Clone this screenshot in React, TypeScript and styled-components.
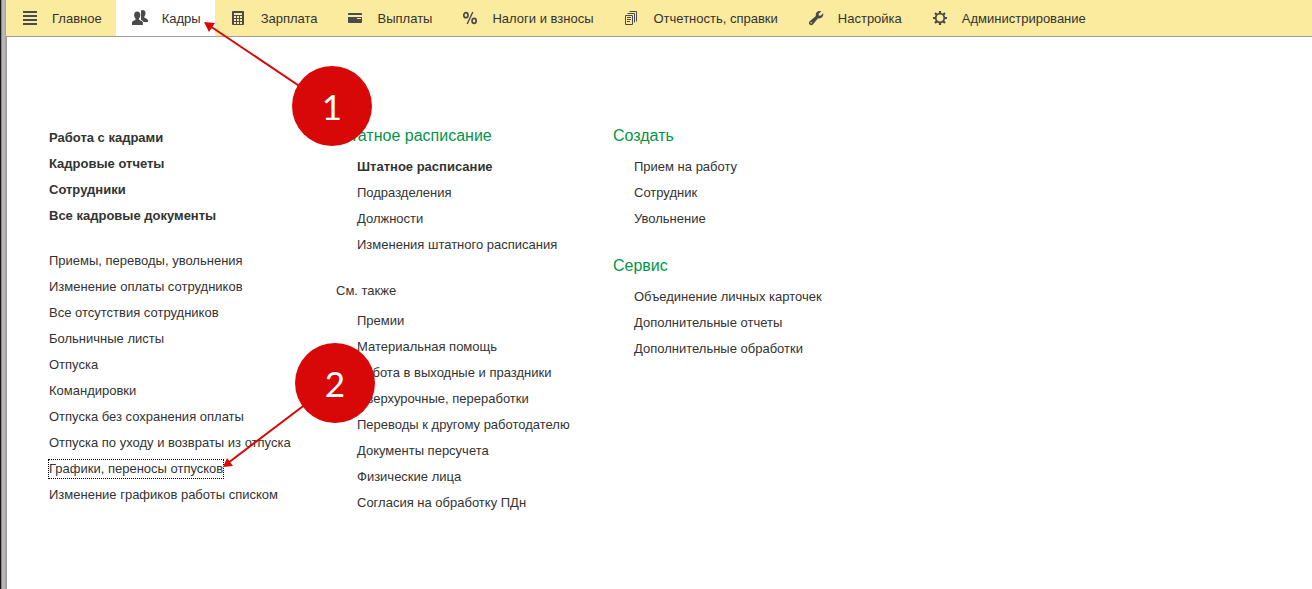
import React from 'react';
import styled, { createGlobalStyle, css } from 'styled-components';

const GlobalStyle = createGlobalStyle`
  *, *::before, *::after { box-sizing: border-box; }
  body {
    margin: 0;
    background: #ffffff;
    color: #333333;
    font-family: "Liberation Sans", Arial, sans-serif;
    font-size: 13px;
  }
`;

const Frame = styled.div`
  position: relative;
  display: flex;
  min-height: 100vh;
`;

const WindowEdge = styled.div`
  flex: none;
  width: 6px;
  border-left: 1px solid #1a1618;
  background: linear-gradient(to right, #8b888a 0 1px, #b9b6b8 1px 4px, #a5a2a4 4px 5px);
`;

const Main = styled.div`
  flex: 1;
  min-width: 0;
  display: flex;
  flex-direction: column;
`;

const SectionBar = styled.nav`
  display: flex;
  height: 37px;
  background: #faeb9e;
  border-bottom: 1px solid #a0a0a0;
`;

const SectionTab = styled.button<{ $active?: boolean }>`
  display: flex;
  align-items: center;
  gap: 14px;
  height: 36px;
  padding: 0 14px 0 16px;
  border: 0;
  background: ${(p) => (p.$active ? '#ffffff' : 'transparent')};
  color: #333333;
  font: inherit;
  white-space: nowrap;
  cursor: pointer;

  svg {
    flex: none;
    display: block;
  }
`;

const Panel = styled.main`
  flex: 1;
  display: grid;
  grid-template-columns: 287px 277px 1fr;
  align-items: start;
  padding: 81px 0 40px 42px;
  border-left: 1px solid #a0a0a0;
`;

const Column = styled.div<{ $plain?: boolean }>`
  display: flex;
  flex-direction: column;
  gap: ${(p) => (p.$plain ? 19 : 16)}px;
  padding-top: ${(p) => (p.$plain ? 7 : 0)}px;
`;

const GroupTitle = styled.h2<{ $minor?: boolean }>`
  margin: 0;
  font-weight: 400;
  ${(p) =>
    p.$minor
      ? css`
          font-size: 13px;
          line-height: 34px;
        `
      : css`
          color: #009646;
          font-size: 16px;
          line-height: 36px;
        `}
`;

const LinkList = styled.ul<{ $indent?: boolean }>`
  margin: 0;
  padding: 0 0 0 ${(p) => (p.$indent ? 21 : 0)}px;
  list-style: none;
`;

const LinkRow = styled.li`
  display: flex;
  align-items: center;
  height: 26px;
`;

const CommandLink = styled.a<{ $strong?: boolean; $focused?: boolean }>`
  color: #333333;
  font-weight: ${(p) => (p.$strong ? 700 : 400)};
  line-height: 18px;
  text-decoration: none;
  white-space: nowrap;
  outline: ${(p) => (p.$focused ? '1px dotted #000000' : 'none')};
`;

const Arrows = styled.svg`
  position: absolute;
  left: 0;
  top: 0;
  pointer-events: none;
`;

const StepMark = styled.div<{ $x: number; $y: number }>`
  position: absolute;
  left: ${(p) => p.$x}px;
  top: ${(p) => p.$y}px;
  width: 80px;
  height: 80px;
  border-radius: 50%;
  background: #d80808;
  color: #ffffff;
  font-family: Lato, sans-serif;
  font-size: 35px;
  line-height: 80px;
  text-align: center;
`;

const INK = '#4a4a4a';

const Icon = ({ children }: { children: React.ReactNode }) => (
  <svg width="16" height="16" viewBox="0 0 16 16" fill={INK} aria-hidden="true">
    {children}
  </svg>
);

const MenuIcon = () => (
  <Icon>
    <path d="M1 1h14v2H1zM1 5h14v2H1zM1 9h14v2H1zM1 13h14v2H1z" />
  </Icon>
);

const PeopleIcon = () => (
  <Icon>
    <path d="M10.6 0c1.900 0 2.900 1.300 2.900 3.100 0 1.400-.5 2.600-1.200 3.300v1.200l2.700 1.300c.7.4 1 .9 1 1.700V12H9V0.500c.5-.3 1-.5 1.600-.5z" />
    <path
      stroke="#ffffff"
      strokeWidth="1.400"
      paintOrder="stroke"
      d="M5.200 1.600c2 0 3.100 1.300 3.100 3.300 0 1.500-.5 2.800-1.300 3.500v1.300l2.700 1.300c.8.4 1.200 1 1.200 1.900V15H0v-2.100c0-.9.3-1.500 1.100-1.900l2.400-1.300V8.400C2.700 7.700 2.100 6.400 2.100 4.900c0-2 1.100-3.300 3.100-3.300z"
    />
  </Icon>
);

const CalculatorIcon = () => (
  <Icon>
    <path
      fillRule="evenodd"
      d="M2 1h10a1 1 0 0 1 1 1v12a1 1 0 0 1-1 1H2a1 1 0 0 1-1-1V2a1 1 0 0 1 1-1zM3 3v2h8V3zM3 6v2h2V6zM6 6v2h2V6zM9 6v2h2V6zM3 9v2h2V9zM6 9v2h2V9zM9 9v2h2V9zM3 12v2h2v-2zM6 12v2h2v-2zM9 12v2h2v-2z"
    />
  </Icon>
);

const CardIcon = () => (
  <Icon>
    <path
      fillRule="evenodd"
      d="M1 3h12a1 1 0 0 1 1 1v1H0V4a1 1 0 0 1 1-1zM0 7h14v5a1 1 0 0 1-1 1H1a1 1 0 0 1-1-1zM9 8v1h4V8z"
    />
  </Icon>
);

const PercentIcon = () => (
  <Icon>
    <g fill="none" stroke={INK}>
      <ellipse cx="3.900" cy="5.200" rx="2.100" ry="2.500" strokeWidth="1.700" />
      <ellipse cx="12.100" cy="10.800" rx="2.100" ry="2.500" strokeWidth="1.700" />
      <path d="M10.800 2L5.200 14" strokeWidth="1.400" />
    </g>
  </Icon>
);

const ReportsIcon = () => (
  <Icon>
    <g fill="none" stroke={INK}>
      <path d="M1.500 5.500h7v9h-7z" />
      <path d="M3.500 3.500h7v9M5.500 1.500h7v10" />
      <path d="M3 7.500h4M3 9.500h4M3 11.500h3" />
    </g>
  </Icon>
);

const WrenchIcon = () => (
  <Icon>
    <path
      fillRule="evenodd"
      d="M10.600 1c1-.2 1.900-.1 2.600.2L10.500 3.900l.4 1.500 1.700.4 2.500-2.500c.4 1.300.1 2.900-1 4-1.100 1.100-2.600 1.400-4 .9l-5.200 6.200c-.9 1-2.400 1-3.300.1s-.9-2.400.1-3.300l6.200-5.200c-.4-1.300-.1-2.700.9-3.800.5-.6 1.100-1 1.800-1.200zM3.200 12a.8.8 0 1 0 0 1.600.8.8 0 0 0 0-1.600z"
    />
  </Icon>
);

const GearIcon = () => (
  <Icon>
    <g fill="none" stroke={INK}>
      <circle cx="8" cy="8" r="4.300" strokeWidth="1.800" />
      <path
        strokeWidth="2.200"
        d="M8 1v2.500M8 12.500V15M1 8h2.500M12.500 8H15M3 3l1.800 1.800M11.200 11.200L13 13M13 3l-1.800 1.800M4.800 11.200L3 13"
      />
    </g>
  </Icon>
);

const sections = [
  { label: 'Главное', Glyph: MenuIcon },
  { label: 'Кадры', Glyph: PeopleIcon, active: true },
  { label: 'Зарплата', Glyph: CalculatorIcon },
  { label: 'Выплаты', Glyph: CardIcon },
  { label: 'Налоги и взносы', Glyph: PercentIcon },
  { label: 'Отчетность, справки', Glyph: ReportsIcon },
  { label: 'Настройка', Glyph: WrenchIcon },
  { label: 'Администрирование', Glyph: GearIcon },
];

type LinksProps = { items: string[]; indent?: boolean; strong?: string[]; focused?: string };

const Links = ({ items, indent, strong = [], focused }: LinksProps) => (
  <LinkList $indent={indent}>
    {items.map((item) => (
      <LinkRow key={item}>
        <CommandLink href="#" $strong={strong.includes(item)} $focused={item === focused}>
          {item}
        </CommandLink>
      </LinkRow>
    ))}
  </LinkList>
);

const mainItems = ['Работа с кадрами', 'Кадровые отчеты', 'Сотрудники', 'Все кадровые документы'];

const documentItems = [
  'Приемы, переводы, увольнения',
  'Изменение оплаты сотрудников',
  'Все отсутствия сотрудников',
  'Больничные листы',
  'Отпуска',
  'Командировки',
  'Отпуска без сохранения оплаты',
  'Отпуска по уходу и возвраты из отпуска',
  'Графики, переносы отпусков',
  'Изменение графиков работы списком',
];

const staffItems = ['Штатное расписание', 'Подразделения', 'Должности', 'Изменения штатного расписания'];

const seeAlsoItems = [
  'Премии',
  'Материальная помощь',
  'Работа в выходные и праздники',
  'Сверхурочные, переработки',
  'Переводы к другому работодателю',
  'Документы персучета',
  'Физические лица',
  'Согласия на обработку ПДн',
];

const createItems = ['Прием на работу', 'Сотрудник', 'Увольнение'];

const serviceItems = ['Объединение личных карточек', 'Дополнительные отчеты', 'Дополнительные обработки'];

export default function App() {
  return (
    <Frame>
      <GlobalStyle />
      <WindowEdge />
      <Main>
        <SectionBar>
          {sections.map(({ label, Glyph, active }) => (
            <SectionTab key={label} type="button" $active={active}>
              <Glyph />
              {label}
            </SectionTab>
          ))}
        </SectionBar>
        <Panel>
          <Column $plain>
            <Links items={mainItems} strong={mainItems} />
            <Links items={documentItems} focused="Графики, переносы отпусков" />
          </Column>
          <Column>
            <section>
              <GroupTitle>Штатное расписание</GroupTitle>
              <Links items={staffItems} strong={['Штатное расписание']} indent />
            </section>
            <section>
              <GroupTitle $minor>См. также</GroupTitle>
              <Links items={seeAlsoItems} indent />
            </section>
          </Column>
          <Column>
            <section>
              <GroupTitle>Создать</GroupTitle>
              <Links items={createItems} indent />
            </section>
            <section>
              <GroupTitle>Сервис</GroupTitle>
              <Links items={serviceItems} indent />
            </section>
          </Column>
        </Panel>
      </Main>
      <Arrows width="400" height="500" viewBox="0 0 400 500" aria-hidden="true">
        <g stroke="#d80808" strokeWidth="2">
          <path d="M332 108L210 26M335 382L228 463" />
        </g>
        <path fill="#d80808" d="M204 22L215 23L209 32ZM223 467L227 458L233 466Z" />
      </Arrows>
      <StepMark $x={292} $y={66}>1</StepMark>
      <StepMark $x={295} $y={343}>2</StepMark>
    </Frame>
  );
}
